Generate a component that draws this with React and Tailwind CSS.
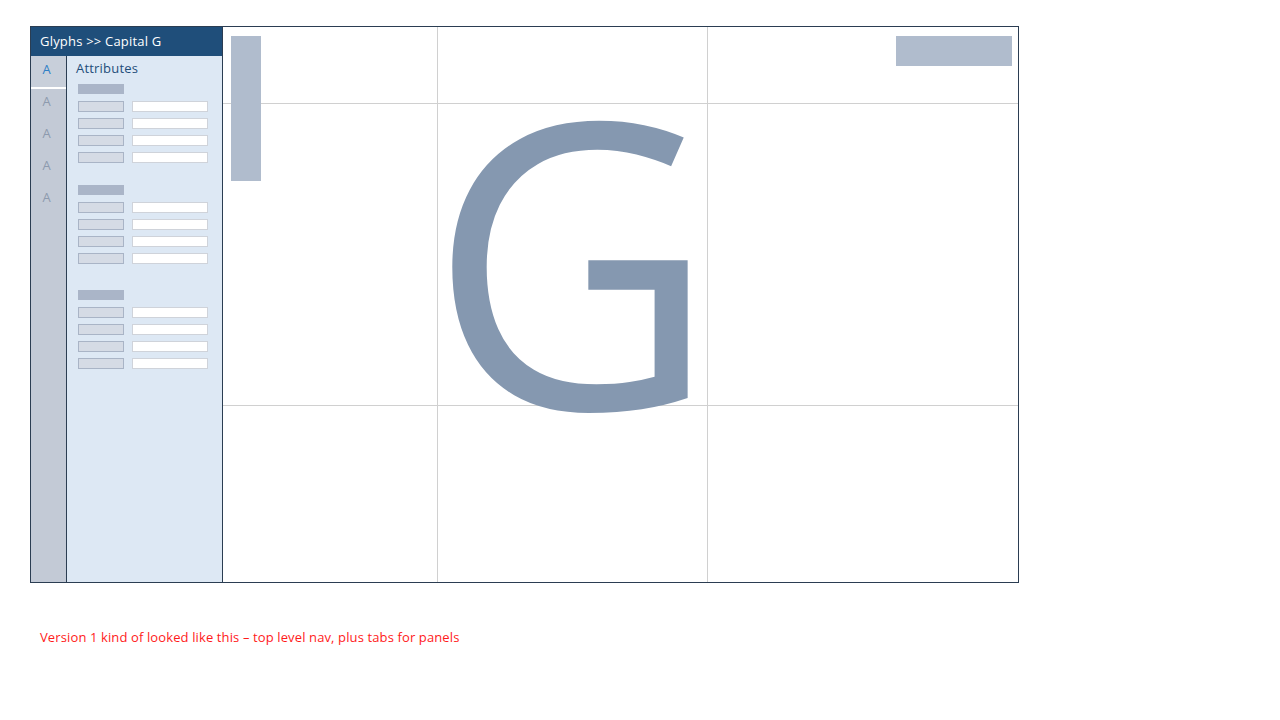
import React from 'react';

const GROUPS = [
    { id: 1, rows: 4, top: 'mt-[7px]' },
    { id: 2, rows: 4, top: 'mt-[16px]' },
    { id: 3, rows: 4, top: 'mt-[20px]' },
];

const TABS = ['A', 'A', 'A', 'A', 'A'];

function Field() {
    return (
        <div className="flex items-start h-[17px]">
            <div className="w-[46px] h-[11px] bg-[#d5dbe5] border border-[#a9b4c6]" />
            <div className="ml-[8px] w-[76px] h-[11px] bg-white border border-[#cfd3da]" />
        </div>
    );
}

export default function App() {
    return (
        <div className="w-[1280px] h-[720px] bg-white relative font-['Open_Sans',sans-serif]">
            <div className="pt-[26px] pl-[30px]">
                <div className="flex w-[989px] h-[557px] border border-[#2b3d52]">
                    {/* left side: breadcrumb + tabs + panel */}
                    <div className="flex flex-col w-[192px] border-r border-[#2b3d52]">
                        <div className="h-[29px] bg-[#1f4e7a] text-white text-[13px] leading-[29px] pl-[9px] tracking-[0.2px]">
                            Glyphs &gt;&gt; Capital G
                        </div>
                        <div className="flex flex-1">
                            <div className="w-[36px] bg-[#c3cad6] border-r border-[#2b3d52] flex flex-col">
                                {TABS.map((t, i) => (
                                    <div
                                        key={i}
                                        className={
                                            i === 0
                                                ? 'h-[33px] flex items-center justify-center pr-[4px] pb-[4px] text-[13px] text-[#2f7fc6] border-b-2 border-white bg-[#c8cfda]'
                                                : 'h-[32px] flex items-center justify-center pr-[4px] pb-[6px] text-[13px] text-[#8d9aae]'
                                        }
                                    >
                                        {t}
                                    </div>
                                ))}
                            </div>
                            <div className="flex-1 bg-[#dde8f4] pl-[9px] pt-[3px]">
                                <div className="text-[13px] text-[#1f4e7a] leading-[18px] tracking-[0.2px]">Attributes</div>
                                <div className="pl-[2px] flex flex-col">
                                    {GROUPS.map(g => (
                                        <div key={g.id} className={g.top}>
                                            <div className="w-[46px] h-[10px] bg-[#aab5c8] mb-[7px]" />
                                            {Array.from({ length: g.rows }).map((_, i) => <Field key={i} />)}
                                        </div>
                                    ))}
                                </div>
                            </div>
                        </div>
                    </div>

                    {/* glyph canvas */}
                    <div className="relative flex-1 grid grid-cols-[215px_270px_1fr] grid-rows-[77px_302px_1fr]">
                        <div className="border-r border-b border-[#d0d0d0]" />
                        <div className="border-r border-b border-[#d0d0d0]" />
                        <div className="border-b border-[#d0d0d0]" />
                        <div className="border-r border-b border-[#d0d0d0]" />
                        <div className="border-r border-b border-[#d0d0d0]" />
                        <div className="border-b border-[#d0d0d0]" />
                        <div className="border-r border-[#d0d0d0]" />
                        <div className="border-r border-[#d0d0d0]" />
                        <div />

                        <div className="absolute left-[8px] top-[9px] w-[30px] h-[145px] bg-[#b0bccd]" />
                        <div className="absolute left-[673px] top-[9px] w-[116px] h-[30px] bg-[#b0bccd]" />
                        <div className="absolute left-[205px] top-[29px] whitespace-nowrap text-[#8598b0] text-[398px] leading-[398px] select-none">
                            G
                        </div>
                    </div>
                </div>
            </div>

            <p className="mt-[45px] ml-[40px] text-[13px] text-[#ff1a1a] leading-[18px] tracking-[0.12px]">
                Version 1 kind of looked like this – top level nav, plus tabs for panels
            </p>
        </div>
    );
}
